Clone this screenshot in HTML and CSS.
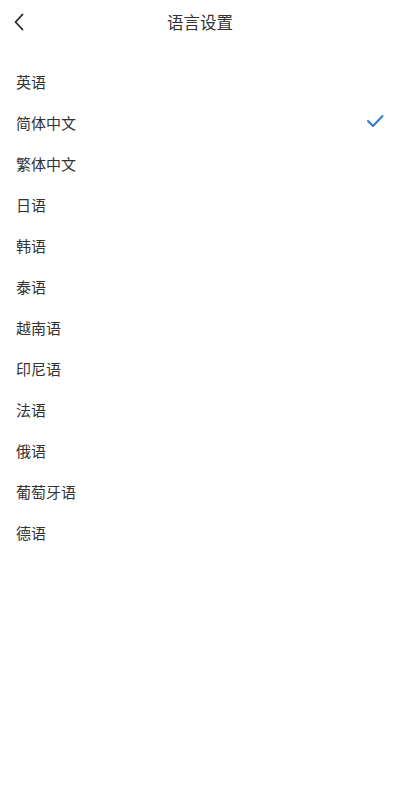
FILE: index.html
```html
<!DOCTYPE html>
<html lang="zh-CN">
<head>
<meta charset="utf-8">
<link rel="stylesheet" href="styles.css">
</head>
<body>
<div class="page">
  <header class="nav">
    <span class="back">
      <svg width="12" height="18" viewBox="0 0 12 18"><path d="M9.5 1.5 L2.5 9 L9.5 16.5" fill="none" stroke="#222" stroke-width="1.8" stroke-linecap="round" stroke-linejoin="round"/></svg>
    </span>
    <h1 class="title">语言设置</h1>
  </header>
  <ul class="list">
    <li class="item">英语</li>
    <li class="item active">简体中文
      <svg class="check" width="18" height="14" viewBox="0 0 18 14"><path d="M2 7 L7 12 L16.5 2" fill="none" stroke="#2d7ad6" stroke-width="2" stroke-linecap="round" stroke-linejoin="round"/></svg>
    </li>
    <li class="item">繁体中文</li>
    <li class="item">日语</li>
    <li class="item">韩语</li>
    <li class="item">泰语</li>
    <li class="item">越南语</li>
    <li class="item">印尼语</li>
    <li class="item">法语</li>
    <li class="item">俄语</li>
    <li class="item">葡萄牙语</li>
    <li class="item">德语</li>
  </ul>
</div>
</body>
</html>
```
FILE: styles.css
```css
* { box-sizing: border-box; }
html, body { margin: 0; padding: 0; background: #fff; }
body {
  font-family: "Noto Sans CJK SC", "Noto Sans", sans-serif;
  color: #333;
}
.page { width: 400px; min-height: 800px; }
.nav {
  position: relative;
  height: 44px;
  display: flex;
  align-items: center;
  justify-content: center;
}
.back {
  position: absolute;
  left: 13px;
  top: 13px;
  width: 12px;
  height: 18px;
  display: flex;
}
.title {
  margin: 0;
  font-size: 16.5px;
  font-weight: 400;
  color: #333;
  line-height: 1;
}
.list {
  list-style: none;
  margin: 17px 0 0;
  padding: 0;
}
.item {
  height: 41px;
  display: flex;
  align-items: center;
  justify-content: space-between;
  padding: 0 16px;
  font-size: 15px;
  color: #333;
}
.check { margin-top: -4px; }
```
